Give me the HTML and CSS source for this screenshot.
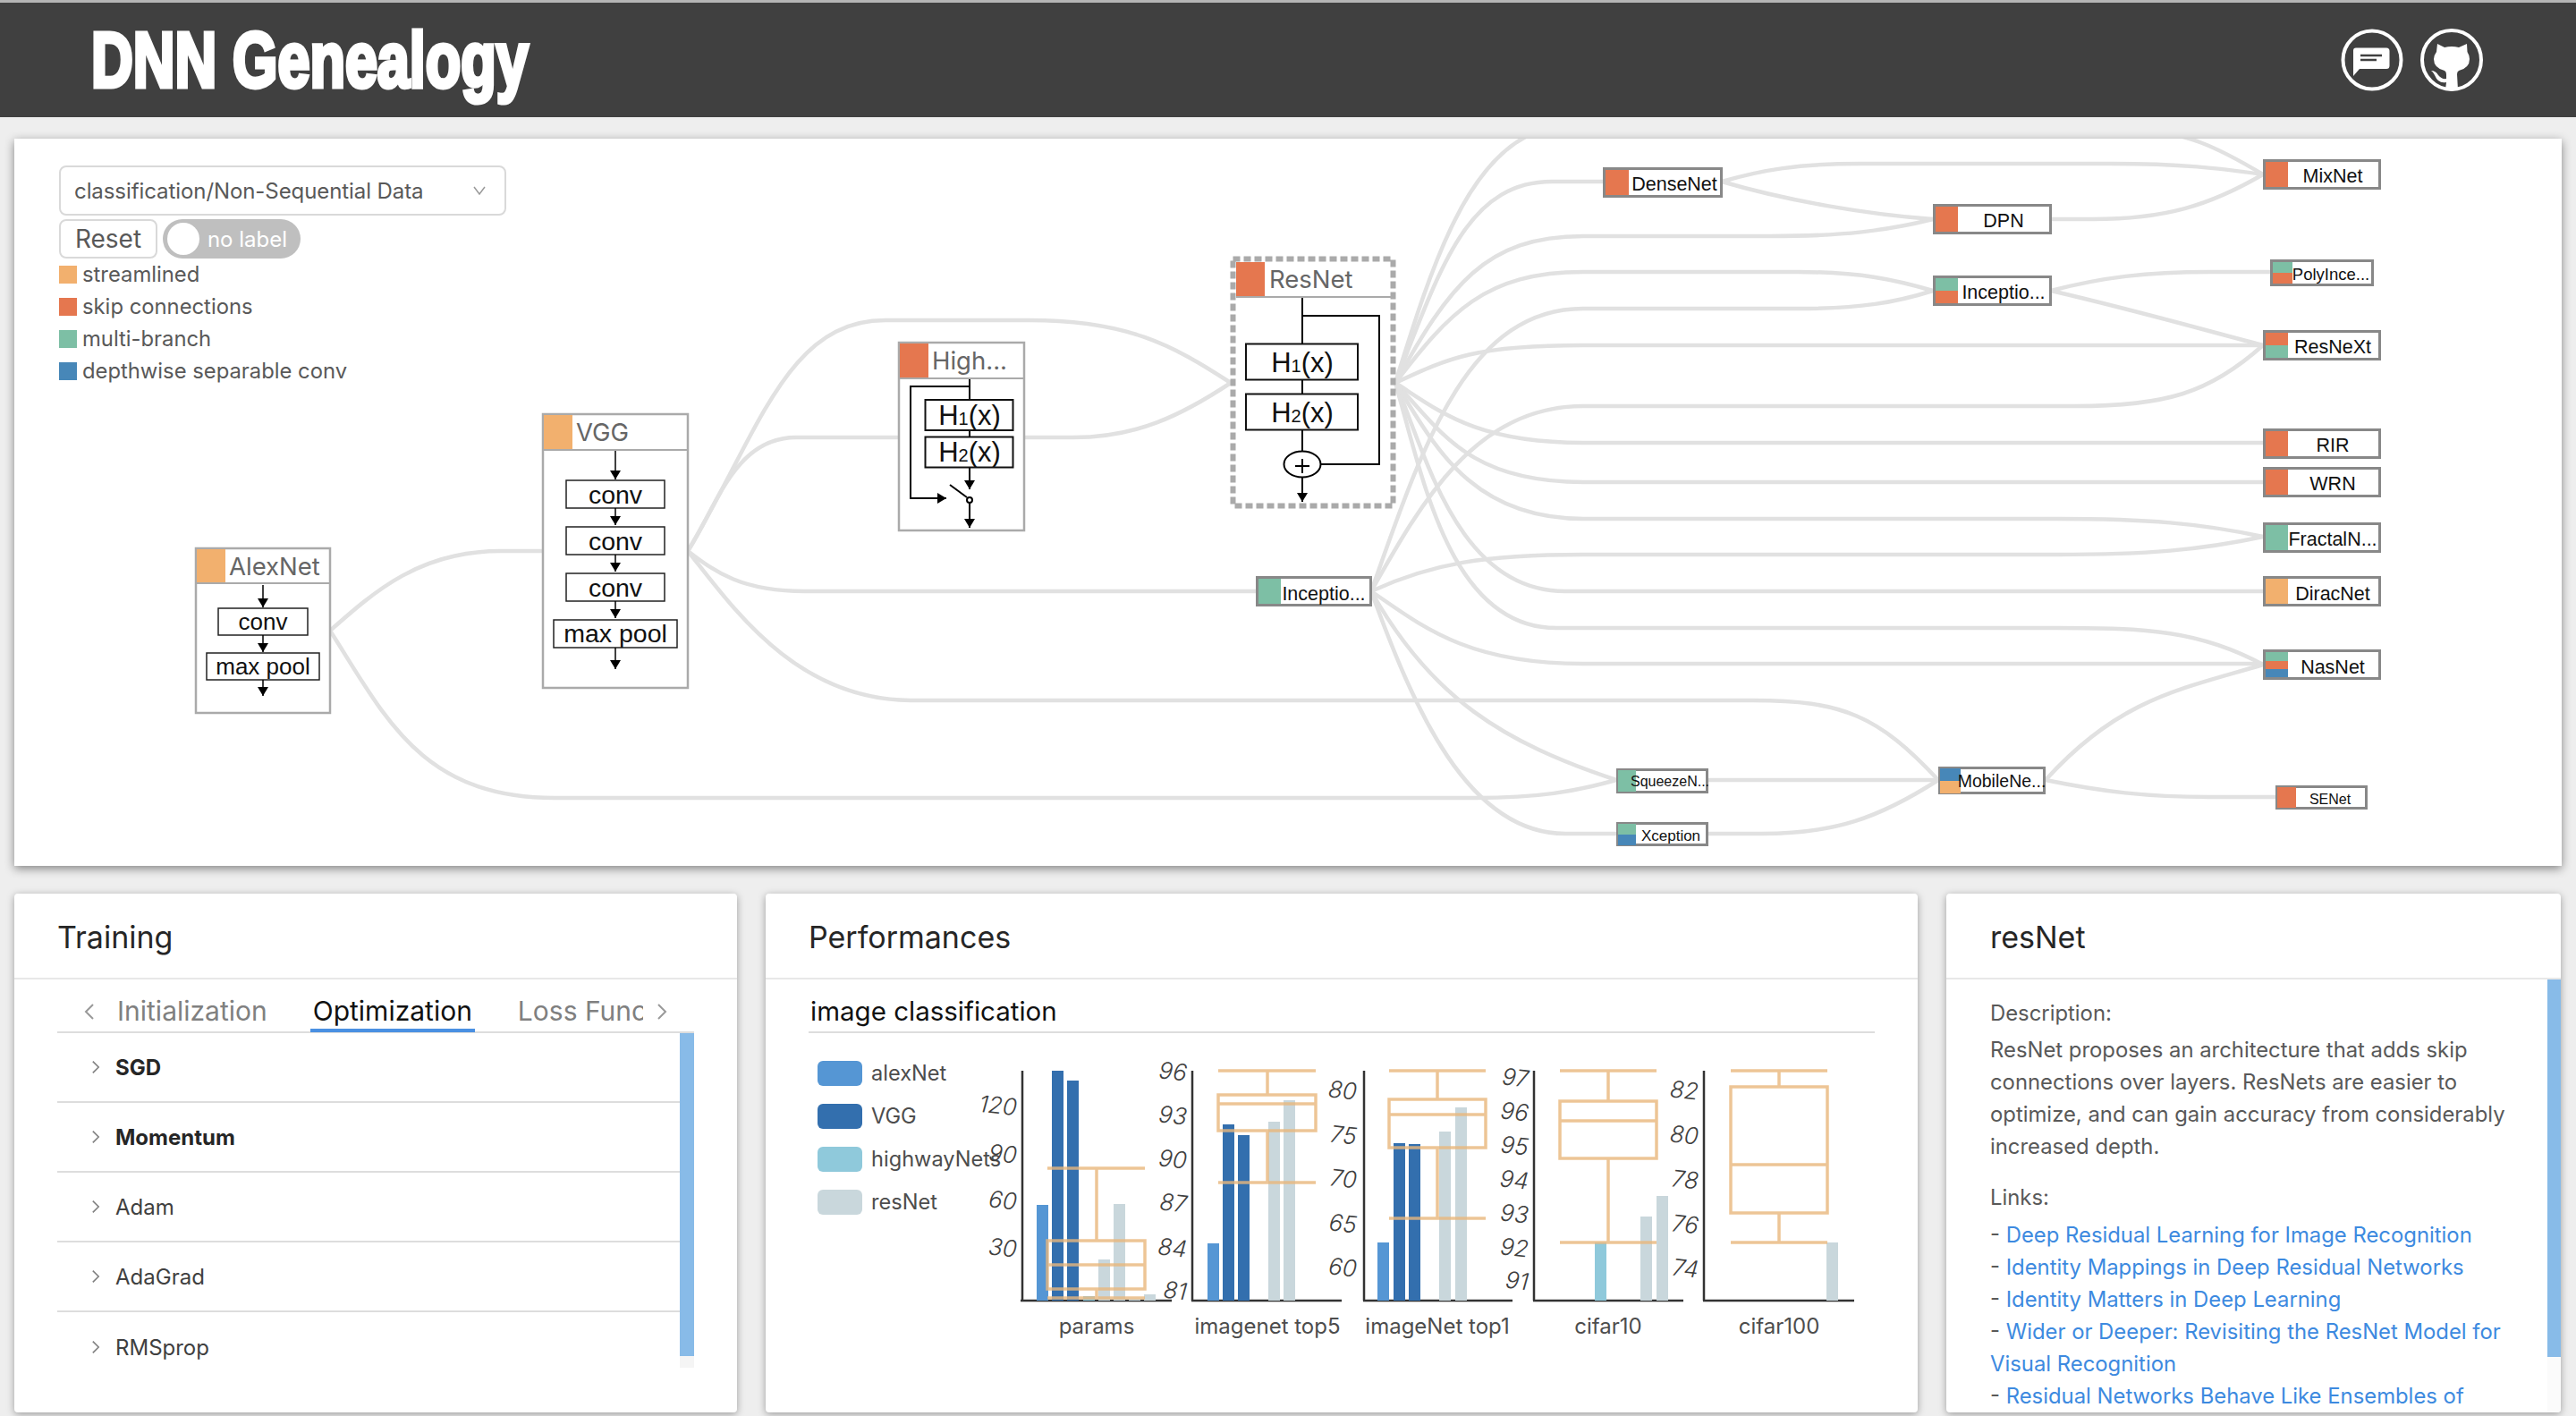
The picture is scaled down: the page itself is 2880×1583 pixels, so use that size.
FILE: index.html
```html
<!DOCTYPE html>
<html lang="en">
<head>
  <meta charset="UTF-8" />
  <title>DNN Genealogy</title>
  <link rel="stylesheet" href="styles.css">
</head>
<body>
<header class="topbar">
  <h1 class="brand">DNN Genealogy</h1>
  <div class="topbar-icons">
    <svg class="round-icon" viewBox="0 0 70 70">
      <circle class="ring" cx="35" cy="35" r="32.5" />
      <path class="solid" d="M17 21.5H51a3.5 3.5 0 0 1 3.500 3.500V41.500a3.500 3.500 0 0 1-3.500 3.500H21L14 53V24.500a3 3 0 0 1 3-3z" />
      <path class="gap-line" d="M22 30H46M22 35H40" />
    </svg>
    <svg class="round-icon" viewBox="0 0 70 70">
      <circle class="ring" cx="35" cy="35" r="33" />
      <path class="solid" d="M19 17L27 21Q35 19 43 21L52 17L52.500 26Q55 30 55 34Q55 44 43 47Q41 48 41 51L42 68.500Q35 70 28 68.500L29 60Q20 62 16 52Q14 48 12 47Q17 47 20 52Q24 57 29 56L29 51Q29 48 27 47Q15 44 15 34Q15 30 18 26Z" />
    </svg>
  </div>
</header>

<main class="page">
  <section class="graph-card">
    <div class="controls">
      <div class="select-box">
        <span>classification/Non-Sequential Data</span>
        <svg class="select-arrow" viewBox="0 0 14 10"><path d="M1 1L7 9L13 1" /></svg>
      </div>
      <div class="control-row">
        <button class="reset-btn" type="button">Reset</button>
        <div class="toggle"><span class="toggle-knob"></span><span>no label</span></div>
      </div>
      <ul class="arch-legend">
        <li><i class="dot orange"></i>streamlined</li>
        <li><i class="dot red"></i>skip connections</li>
        <li><i class="dot green"></i>multi-branch</li>
        <li><i class="dot blue"></i>depthwise separable conv</li>
      </ul>
    </div>

    <!-- viewBox uses page coordinates -->
    <svg class="graph" viewBox="16 155 2848 813">
      <defs>
        <marker id="arrow" viewBox="0 0 10 20" refX="10" refY="10" markerWidth="10" markerHeight="20" markerUnits="userSpaceOnUse" orient="auto-start-reverse">
          <path d="M0 4L10 10L0 16Z" />
        </marker>
      </defs>

      <g class="edges">
        <path d="M1560 428C1600 300 1640 170 1725 145L2380 145C2440 145 2480 165 2530 195" />
        <path d="M1560 428C1610 300 1640 203 1735 203L1792 203" />
        <path d="M1560 428C1620 320 1660 264 1770 264L1980 264C2060 264 2110 258 2161 245" />
        <path d="M1560 428C1620 350 1660 304 1770 304L2010 304C2080 304 2120 313 2161 325" />
        <path d="M1560 428C1620 400 1650 386 1770 386L2530 386" />
        <path d="M1560 428C1610 460 1650 495 1770 495L2530 495" />
        <path d="M1560 428C1610 480 1640 539 1770 539L2530 539" />
        <path d="M1560 428C1600 490 1640 580 1770 580L2300 580C2400 580 2460 585 2530 600" />
        <path d="M1560 428C1595 510 1630 661 1750 661L2530 661" />
        <path d="M1560 428C1590 530 1620 702 1740 702L2300 702C2400 702 2460 705 2530 743" />
        <path d="M1533 661C1590 500 1640 345 1770 345L2010 345C2080 345 2120 338 2161 325" />
        <path d="M1533 661C1590 560 1650 454 1770 454L2320 454C2420 454 2470 440 2530 386" />
        <path d="M1533 661C1600 630 1660 620 1770 620L2300 620C2400 620 2460 615 2530 600" />
        <path d="M1533 661C1590 700 1640 742 1770 742L2530 742" />
        <path d="M1533 661C1600 780 1680 830 1807 872" />
        <path d="M1533 661C1580 790 1640 932 1750 932L1807 932" />
        <path d="M769 616C800 570 820 489 890 489L1004 489" />
        <path d="M769 616C850 480 880 358 990 358L1150 358C1260 358 1310 385 1376 428" />
        <path d="M1146 489L1200 489C1270 489 1320 465 1376 428" />
        <path d="M769 616C800 640 830 661 900 661L1404 661" />
        <path d="M769 616C820 680 890 783 1020 783L1960 783C2060 783 2100 800 2167 872" />
        <path d="M369 705C420 660 470 616 560 616L606 616" />
        <path d="M369 705C430 800 470 892 620 892L1650 892C1720 892 1760 885 1807 872" />
        <path d="M1925 203C1970 190 2010 183 2080 183L2360 183C2440 183 2480 188 2530 195" />
        <path d="M1925 203C2000 225 2090 240 2161 245" />
        <path d="M2293 245L2340 245C2420 245 2470 230 2530 195" />
        <path d="M2293 325C2350 310 2400 304 2470 304L2538 304" />
        <path d="M2293 325C2380 345 2450 365 2530 386" />
        <path d="M1909 872L2167 872" />
        <path d="M1909 932L1970 932C2050 932 2100 915 2167 872" />
        <path d="M2287 872C2370 780 2440 770 2530 743" />
        <path d="M2287 872C2350 885 2400 891 2470 891L2544 891" />
      </g>

      <!-- big nodes with block diagrams -->
      <g>
        <rect class="big-box" x="219" y="613" width="150" height="184" />
        <rect class="fill-orange" x="220" y="614" width="32" height="38" />
        <path class="big-rule" d="M220 652H368" />
        <text class="big-title" x="256" y="643">AlexNet</text>
        <path class="wire thin" marker-end="url(#arrow)" d="M294 654V679" />
        <rect class="block" x="244" y="680" width="100" height="30" />
        <text class="block-text size-26" x="294" y="704">conv</text>
        <path class="wire thin" marker-end="url(#arrow)" d="M294 710V729" />
        <rect class="block" x="231" y="730" width="126" height="30" />
        <text class="block-text size-26" x="294" y="754">max pool</text>
        <path class="wire thin" marker-end="url(#arrow)" d="M294 760V778" />
      </g>
      <g>
        <rect class="big-box" x="607" y="463" width="162" height="306" />
        <rect class="fill-orange" x="608" y="464" width="32" height="39" />
        <path class="big-rule" d="M608 503H768" />
        <text class="big-title" x="644" y="493">VGG</text>
        <path class="wire thin" marker-end="url(#arrow)" d="M688 504V536" />
        <rect class="block" x="633" y="537" width="110" height="31" />
        <text class="block-text size-28" x="688" y="563">conv</text>
        <path class="wire thin" marker-end="url(#arrow)" d="M688 568V587" />
        <rect class="block" x="633" y="589" width="110" height="31" />
        <text class="block-text size-28" x="688" y="615">conv</text>
        <path class="wire thin" marker-end="url(#arrow)" d="M688 620V639" />
        <rect class="block" x="633" y="641" width="110" height="31" />
        <text class="block-text size-28" x="688" y="667">conv</text>
        <path class="wire thin" marker-end="url(#arrow)" d="M688 672V691" />
        <rect class="block" x="619" y="693" width="138" height="31" />
        <text class="block-text size-28" x="688" y="718">max pool</text>
        <path class="wire thin" marker-end="url(#arrow)" d="M688 724V748" />
      </g>
      <g>
        <rect class="big-box" x="1005" y="383" width="140" height="210" />
        <rect class="fill-red" x="1006" y="384" width="32" height="39" />
        <path class="big-rule" d="M1006 423H1144" />
        <text class="big-title" x="1042" y="413">High...</text>
        <path class="wire" d="M1084 424V447M1084 481V488M1084 432H1018V557H1050" />
        <path class="wire" marker-end="url(#arrow)" d="M1048 557H1058" />
        <rect class="block thick" x="1034.500" y="447" width="98" height="34" />
        <text class="block-text size-30" x="1084" y="475">H<tspan class="sub">1</tspan>(x)</text>
        <rect class="block thick" x="1034.500" y="488.500" width="98" height="34" />
        <text class="block-text size-30" x="1084" y="516">H<tspan class="sub">2</tspan>(x)</text>
        <path class="wire" marker-end="url(#arrow)" d="M1084 523V547" />
        <path class="wire" d="M1062 542L1081 556" />
        <circle class="wire white" cx="1084" cy="559" r="3" />
        <path class="wire" marker-end="url(#arrow)" d="M1084 562V590" />
      </g>
      <g>
        <rect class="focus-box" x="1378.500" y="289.500" width="179" height="276" />
        <rect class="fill-red" x="1382" y="293" width="32" height="38" />
        <path class="big-rule" d="M1382 332H1555" />
        <text class="big-title" x="1419" y="322">ResNet</text>
        <path class="wire" d="M1456 333V384M1456 425V440M1456 481V504M1456 353H1542V519H1476" />
        <rect class="block thick" x="1393" y="384.500" width="125" height="40" />
        <text class="block-text size-30" x="1456" y="416">H<tspan class="sub">1</tspan>(x)</text>
        <rect class="block thick" x="1393" y="440.500" width="125" height="40" />
        <text class="block-text size-30" x="1456" y="472">H<tspan class="sub">2</tspan>(x)</text>
        <ellipse class="wire white" cx="1456" cy="519" rx="20.500" ry="14.500" />
        <path class="wire" d="M1448 521H1464M1456 513V529" />
        <path class="wire" marker-end="url(#arrow)" d="M1456 534V561" />
      </g>

      <!-- compact nodes -->
      <g>
        <rect class="small-box" x="1793.500" y="188.500" width="131" height="31" />
        <rect class="fill-red" x="1795" y="190" width="26" height="28" />
        <text class="small-text size-22" x="1872" y="213">DenseNet</text>
      </g>
      <g>
        <rect class="small-box" x="2162.500" y="229.500" width="130" height="31" />
        <rect class="fill-red" x="2164" y="231" width="25" height="28" />
        <text class="small-text size-22" x="2240" y="254">DPN</text>
      </g>
      <g>
        <rect class="small-box" x="2531.500" y="179.500" width="129" height="31" />
        <rect class="fill-red" x="2533" y="181" width="25" height="28" />
        <text class="small-text size-22" x="2608" y="204">MixNet</text>
      </g>
      <g>
        <rect class="small-box" x="2162.500" y="309.500" width="130" height="31" />
        <rect class="fill-green" x="2164" y="311" width="25" height="14" />
        <rect class="fill-red" x="2164" y="325" width="25" height="14" />
        <text class="small-text size-22" x="2240" y="334">Inceptio...</text>
      </g>
      <g>
        <rect class="small-box" x="2539.500" y="291.500" width="113" height="27" />
        <rect class="fill-green" x="2541" y="293" width="22" height="12" />
        <rect class="fill-red" x="2541" y="305" width="22" height="12" />
        <text class="small-text size-18" x="2606" y="313">PolyInce...</text>
      </g>
      <g>
        <rect class="small-box" x="2531.500" y="370.500" width="129" height="31" />
        <rect class="fill-red" x="2533" y="372" width="25" height="14" />
        <rect class="fill-green" x="2533" y="386" width="25" height="14" />
        <text class="small-text size-22" x="2608" y="395">ResNeXt</text>
      </g>
      <g>
        <rect class="small-box" x="2531.500" y="480.500" width="129" height="31" />
        <rect class="fill-red" x="2533" y="482" width="25" height="28" />
        <text class="small-text size-22" x="2608" y="505">RIR</text>
      </g>
      <g>
        <rect class="small-box" x="2531.500" y="523.500" width="129" height="31" />
        <rect class="fill-red" x="2533" y="525" width="25" height="28" />
        <text class="small-text size-22" x="2608" y="548">WRN</text>
      </g>
      <g>
        <rect class="small-box" x="2531.500" y="585.500" width="129" height="31" />
        <rect class="fill-green" x="2533" y="587" width="25" height="28" />
        <text class="small-text size-22" x="2608" y="610">FractalN...</text>
      </g>
      <g>
        <rect class="small-box" x="2531.500" y="645.500" width="129" height="31" />
        <rect class="fill-orange" x="2533" y="647" width="25" height="28" />
        <text class="small-text size-22" x="2608" y="671">DiracNet</text>
      </g>
      <g>
        <rect class="small-box" x="2531.500" y="727.500" width="129" height="31" />
        <rect class="fill-green" x="2533" y="729" width="25" height="10" />
        <rect class="fill-red" x="2533" y="739" width="25" height="9" />
        <rect class="fill-blue" x="2533" y="748" width="25" height="9" />
        <text class="small-text size-22" x="2608" y="753">NasNet</text>
      </g>
      <g>
        <rect class="small-box" x="1405.500" y="645.500" width="127" height="31" />
        <rect class="fill-green" x="1407" y="647" width="25" height="28" />
        <text class="small-text size-22" x="1480" y="671">Inceptio...</text>
      </g>
      <g>
        <rect class="small-box" x="1808.500" y="860.500" width="100" height="25" />
        <rect class="fill-green" x="1809" y="861" width="20" height="24" />
        <text class="small-text size-16" x="1867" y="879">SqueezeN...</text>
      </g>
      <g>
        <rect class="small-box" x="1808.500" y="920.500" width="100" height="24" />
        <rect class="fill-green" x="1809" y="921" width="20" height="12" />
        <rect class="fill-blue" x="1809" y="933" width="20" height="12" />
        <text class="small-text size-17" x="1868" y="940">Xception</text>
      </g>
      <g>
        <rect class="small-box" x="2168.500" y="858.500" width="117" height="28" />
        <rect class="fill-blue" x="2169" y="859" width="23" height="14" />
        <rect class="fill-orange" x="2169" y="873" width="23" height="14" />
        <text class="small-text size-20" x="2238" y="880">MobileNe...</text>
      </g>
      <g>
        <rect class="small-box" x="2545.500" y="879.500" width="100" height="24" />
        <rect class="fill-red" x="2546" y="880" width="21" height="23" />
        <text class="small-text size-16" x="2605" y="899">SENet</text>
      </g>
    </svg>
  </section>

  <div class="panels">
    <section class="panel panel-training">
      <h2 class="panel-title">Training</h2>
      <div class="panel-body training-body">
        <div class="tabs">
          <svg class="tab-arrow" viewBox="0 0 12 20"><path d="M10 2L2 10L10 18" /></svg>
          <div class="tab-list">
            <span class="tab">Initialization</span>
            <span class="tab tab-active">Optimization</span>
            <span class="tab">Loss Function</span>
          </div>
          <svg class="tab-arrow" viewBox="0 0 12 20"><path d="M2 2L10 10L2 18" /></svg>
        </div>
        <div class="list-wrap">
          <ul class="method-list">
            <li class="method method-bold"><svg class="chevron" viewBox="0 0 12 20"><path d="M2 2L10 10L2 18" /></svg>SGD</li>
            <li class="method method-bold"><svg class="chevron" viewBox="0 0 12 20"><path d="M2 2L10 10L2 18" /></svg>Momentum</li>
            <li class="method"><svg class="chevron" viewBox="0 0 12 20"><path d="M2 2L10 10L2 18" /></svg>Adam</li>
            <li class="method"><svg class="chevron" viewBox="0 0 12 20"><path d="M2 2L10 10L2 18" /></svg>AdaGrad</li>
            <li class="method"><svg class="chevron" viewBox="0 0 12 20"><path d="M2 2L10 10L2 18" /></svg>RMSprop</li>
          </ul>
          <div class="scroll-track list-track"><div class="scroll-thumb list-thumb"></div></div>
        </div>
      </div>
    </section>

    <section class="panel panel-perf">
      <h2 class="panel-title">Performances</h2>
      <div class="panel-body perf-body">
        <h3 class="perf-heading">image classification</h3>
        <div class="perf-row">
          <ul class="perf-legend">
            <li><i class="perf-key key-alex"></i>alexNet</li>
            <li><i class="perf-key key-vgg"></i>VGG</li>
            <li><i class="perf-key key-highway"></i>highwayNets</li>
            <li><i class="perf-key key-res"></i>resNet</li>
          </ul>
          <!-- viewBox uses page coordinates -->
          <svg class="charts" viewBox="1100 1170 990 340">
            <g class="axes">
              <path d="M1143 1197V1454M1141 1454H1310" />
              <path d="M1333 1197V1454M1332 1454H1500" />
              <path d="M1525 1197V1454M1524 1454H1691" />
              <path d="M1715 1197V1454M1714 1454H1882" />
              <path d="M1905 1197V1454M1904 1454H2073" />
            </g>

            <rect class="bar key-alex" x="1159" y="1347" width="13" height="107" />
            <rect class="bar key-vgg" x="1176" y="1197" width="13" height="257" />
            <rect class="bar key-vgg" x="1193" y="1208" width="13" height="246" />
            <rect class="bar key-highway" x="1211" y="1449" width="13" height="5" />
            <rect class="bar key-res" x="1228" y="1408" width="13" height="46" />
            <rect class="bar key-res" x="1245" y="1346" width="13" height="108" />
            <rect class="bar key-res" x="1262" y="1452" width="13" height="2" />
            <rect class="bar key-res" x="1279" y="1447" width="13" height="7" />

            <rect class="bar key-alex" x="1350" y="1390" width="13" height="64" />
            <rect class="bar key-vgg" x="1367" y="1257" width="13" height="197" />
            <rect class="bar key-vgg" x="1384" y="1269" width="13" height="185" />
            <rect class="bar key-res" x="1418" y="1254" width="13" height="200" />
            <rect class="bar key-res" x="1435" y="1230" width="13" height="224" />

            <rect class="bar key-alex" x="1540" y="1389" width="13" height="65" />
            <rect class="bar key-vgg" x="1558" y="1278" width="13" height="176" />
            <rect class="bar key-vgg" x="1575" y="1279" width="13" height="175" />
            <rect class="bar key-res" x="1609" y="1265" width="13" height="189" />
            <rect class="bar key-res" x="1627" y="1238" width="13" height="216" />

            <rect class="bar key-highway" x="1783" y="1389" width="13" height="65" />
            <rect class="bar key-res" x="1834" y="1360" width="13" height="94" />
            <rect class="bar key-res" x="1852" y="1337" width="13" height="117" />

            <rect class="bar key-res" x="2042" y="1389" width="13" height="65" />

            <g class="box-plot">
              <path d="M1171 1306H1280M1226 1306V1387M1171 1387H1280V1441H1171ZM1171 1414H1280M1226 1441V1451M1171 1451H1280" />
              <path d="M1362 1197H1471M1417 1197V1224M1362 1224H1471V1264H1362ZM1362 1234H1471M1417 1264V1322M1362 1322H1471" />
              <path d="M1553 1197H1661M1607 1197V1229M1553 1229H1661V1283H1553ZM1553 1246H1661M1607 1283V1362M1553 1362H1661" />
              <path d="M1744 1197H1852M1798 1197V1231M1744 1231H1852V1295H1744ZM1744 1253H1852M1798 1295V1389M1744 1389H1852" />
              <path d="M1935 1197H2043M1989 1197V1215M1935 1215H2043V1356H1935ZM1935 1302H2043M1989 1356V1389M1935 1389H2043" />
            </g>

            <g class="tick">
              <text x="1137" y="1245">120</text>
              <text x="1137" y="1299">90</text>
              <text x="1137" y="1351">60</text>
              <text x="1137" y="1404">30</text>
              <text x="1327" y="1207">96</text>
              <text x="1327" y="1256">93</text>
              <text x="1327" y="1305">90</text>
              <text x="1327" y="1354">87</text>
              <text x="1327" y="1404">84</text>
              <text x="1327" y="1452">81</text>
              <text x="1517" y="1228">80</text>
              <text x="1517" y="1278">75</text>
              <text x="1517" y="1327">70</text>
              <text x="1517" y="1377">65</text>
              <text x="1517" y="1426">60</text>
              <text x="1709" y="1214">97</text>
              <text x="1709" y="1252">96</text>
              <text x="1709" y="1290">95</text>
              <text x="1709" y="1328">94</text>
              <text x="1709" y="1366">93</text>
              <text x="1709" y="1404">92</text>
              <text x="1709" y="1441">91</text>
              <text x="1899" y="1228">82</text>
              <text x="1899" y="1278">80</text>
              <text x="1899" y="1328">78</text>
              <text x="1899" y="1378">76</text>
              <text x="1899" y="1427">74</text>
            </g>

            <g class="chart-name">
              <text x="1226" y="1491">params</text>
              <text x="1417" y="1491">imagenet top5</text>
              <text x="1607" y="1491">imageNet top1</text>
              <text x="1798" y="1491">cifar10</text>
              <text x="1989" y="1491">cifar100</text>
            </g>
          </svg>
        </div>
      </div>
    </section>

    <section class="panel panel-info">
      <h2 class="panel-title">resNet</h2>
      <div class="info-body">
        <div class="info-text">
          <p class="info-label">Description:</p>
          <p class="info-para">ResNet proposes an architecture that adds skip connections over layers. ResNets are easier to optimize, and can gain accuracy from considerably increased depth.</p>
          <p class="info-label links-label">Links:</p>
          <p class="info-para">- <a href="#">Deep Residual Learning for Image Recognition</a></p>
          <p class="info-para">- <a href="#">Identity Mappings in Deep Residual Networks</a></p>
          <p class="info-para">- <a href="#">Identity Matters in Deep Learning</a></p>
          <p class="info-para">- <a href="#">Wider or Deeper: Revisiting the ResNet Model for Visual Recognition</a></p>
          <p class="info-para">- <a href="#">Residual Networks Behave Like Ensembles of Relatively Shallow Networks</a></p>
        </div>
        <div class="scroll-track info-track"><div class="scroll-thumb info-thumb"></div></div>
      </div>
    </section>
  </div>
</main>
</body>
</html>
```

FILE: styles.css
```css
html,
body {
  margin: 0;
  padding: 0;
  height: 1583px;
  overflow: hidden;
}

body {
  font-family: Inter, "Noto Sans", sans-serif;
  background-color: #eeeeee;
  color: #595959;
}

ul {
  list-style: none;
  margin: 0;
  padding: 0;
}

.topbar {
  height: 128px;
  border-top: 3px solid #b5b5b5;
  background-color: #404040;
  display: flex;
  align-items: center;
  justify-content: space-between;
  padding: 0 104px 0 102px;
}

.brand {
  margin: 0;
  font-family: "Liberation Sans", sans-serif;
  font-size: 88px;
  font-weight: bold;
  color: #fff;
  white-space: nowrap;
  -webkit-text-stroke: 5px #fff;
  transform: scaleX(0.735);
  transform-origin: left center;
}

.topbar-icons {
  display: flex;
  gap: 19px;
}

.round-icon {
  width: 70px;
  height: 70px;
  display: block;
}

.ring {
  fill: none;
  stroke: #fff;
  stroke-width: 4;
}

.solid {
  fill: #fff;
}

.gap-line {
  stroke: #404040;
  stroke-width: 2.500;
  fill: none;
}

.page {
  padding: 24px 16px 0;
}

.graph-card {
  position: relative;
  height: 813px;
  background-color: #fff;
  box-shadow: 0 3px 10px rgba(0, 0, 0, 0.45);
  overflow: hidden;
}

.graph {
  display: block;
  width: 2848px;
  height: 813px;
}

/* sits over the graph, top left */
.controls {
  position: absolute;
  left: 50px;
  top: 30px;
  width: 500px;
  font-size: 24px;
}

.select-box {
  height: 52px;
  border: 2px solid #d9d9d9;
  border-radius: 8px;
  display: flex;
  align-items: center;
  justify-content: space-between;
  padding: 0 14px 0 15px;
  letter-spacing: -0.08px;
}

.select-arrow {
  width: 14px;
  height: 10px;
  fill: none;
  stroke: #999;
  stroke-width: 1.500;
  margin-right: 7px;
}

.control-row {
  display: flex;
  gap: 6px;
  margin-top: 4px;
}

.reset-btn {
  width: 110px;
  height: 44px;
  padding: 0;
  background: #fff;
  border: 2px solid #d9d9d9;
  border-radius: 8px;
  font-family: inherit;
  font-size: 28px;
  color: #595959;
}

.toggle {
  width: 154px;
  height: 44px;
  box-sizing: border-box;
  padding: 0 15px 0 5px;
  border-radius: 22px;
  background-color: #bfbfbf;
  color: #fff;
  display: flex;
  align-items: center;
  justify-content: space-between;
}

.toggle-knob {
  width: 36px;
  height: 36px;
  border-radius: 50%;
  background-color: #fff;
}

.arch-legend {
  margin-top: 8px;
  font-size: 23.800px;
}

.arch-legend li {
  height: 36px;
  display: flex;
  align-items: flex-start;
  line-height: 20px;
  gap: 6px;
  white-space: nowrap;
}

.dot {
  width: 20px;
  height: 20px;
}

.orange { background-color: #f2b06e; }
.red { background-color: #e5774f; }
.green { background-color: #7dbfa5; }
.blue { background-color: #4787b8; }

.fill-orange { fill: #f2b06e; }
.fill-red { fill: #e5774f; }
.fill-green { fill: #7dbfa5; }
.fill-blue { fill: #4787b8; }

.edges path {
  fill: none;
  stroke: #e1e1e1;
  stroke-width: 4.500;
}

.big-box {
  fill: #fff;
  stroke: #aaaaaa;
  stroke-width: 2.500;
}

.focus-box {
  fill: #fff;
  stroke: #aaaaaa;
  stroke-width: 6;
  stroke-dasharray: 8 4;
}

.big-rule {
  stroke: #aaaaaa;
  stroke-width: 2;
}

.big-title {
  font-size: 27.500px;
  fill: #666666;
}

.small-box {
  fill: #fff;
  stroke: #888888;
  stroke-width: 3;
}

.small-text,
.block-text {
  font-family: "Liberation Sans", sans-serif;
  fill: #111;
  text-anchor: middle;
}

.size-16 { font-size: 16px; }
.size-17 { font-size: 17px; }
.size-18 { font-size: 18.500px; }
.size-20 { font-size: 19.500px; }
.size-22 { font-size: 21.500px; }
.size-26 { font-size: 26px; }
.size-28 { font-size: 28.500px; }
.size-30 { font-size: 31px; }

.sub {
  font-size: 20px;
}

.block {
  fill: #fff;
  stroke: #222;
  stroke-width: 1.500;
}

.block.thick {
  stroke: #111;
  stroke-width: 2;
}

.wire {
  fill: none;
  stroke: #000;
  stroke-width: 2;
}

.wire.thin {
  stroke-width: 1.500;
}

.wire.white {
  fill: #fff;
}

.panels {
  display: flex;
  gap: 32px;
  margin-top: 31px;
}

.panel {
  height: 580px;
  background-color: #fff;
  border-radius: 4px;
  box-shadow: 0 2px 8px rgba(0, 0, 0, 0.35);
  overflow: hidden;
  box-sizing: border-box;
}

.panel-training { width: 808px; }
.panel-perf { width: 1288px; }
.panel-info { width: 687px; }

.panel-title {
  box-sizing: border-box;
  height: 96px;
  margin: 0;
  padding: 0 48px;
  border-bottom: 2px solid #e8e8e8;
  font-size: 34px;
  font-weight: 400;
  line-height: 97px;
  color: #262626;
}

.panel-info .panel-title {
  padding-left: 49px;
}

.panel-body {
  padding: 0 48px;
}

.tabs {
  height: 58px;
  border-bottom: 2px solid #dddddd;
  display: flex;
  align-items: center;
  padding: 0 30px;
  box-sizing: content-box;
}

.tab-arrow {
  flex: none;
  width: 12px;
  height: 20px;
  margin-top: 14px;
  fill: none;
  stroke: #999;
  stroke-width: 2;
}

.tab-list {
  flex: 1;
  height: 60px;
  overflow: hidden;
  display: flex;
  gap: 45px;
  padding-left: 22px;
  margin-right: 15px;
  white-space: nowrap;
}

.tab {
  height: 56px;
  line-height: 73px;
  padding: 0 3px;
  font-size: 30px;
  color: #808080;
}

.tab-active {
  color: #111;
  border-bottom: 4px solid #4a90e2;
}

.list-wrap {
  display: flex;
  align-items: flex-start;
}

.method-list {
  flex: 1;
}

.method {
  box-sizing: border-box;
  height: 78px;
  border-bottom: 2px solid #dddddd;
  display: flex;
  align-items: center;
  font-size: 24px;
  color: #404040;
}

.method:last-child {
  border-bottom: none;
}

.method-bold {
  font-weight: 700;
  color: #262626;
}

.chevron {
  width: 10px;
  height: 16px;
  margin: 0 17px 0 38px;
  fill: none;
  stroke: #808080;
  stroke-width: 2;
}

.scroll-track {
  flex: none;
  background-color: #f5f5f5;
}

.scroll-thumb {
  background-color: #88bbe8;
}

.list-track {
  width: 16px;
  height: 374px;
}

.list-thumb {
  height: 361px;
}

.perf-heading {
  box-sizing: border-box;
  height: 60px;
  margin: 0;
  padding-left: 2px;
  border-bottom: 2px solid #dddddd;
  font-size: 29.500px;
  font-weight: 400;
  line-height: 71px;
  color: #111;
}

.perf-row {
  display: flex;
  margin-top: 15px;
}

.perf-legend {
  width: 196px;
  flex: none;
  padding: 16px 0 0 10px;
  box-sizing: border-box;
  font-size: 23.600px;
  white-space: nowrap;
  color: #4d4d4d;
}

.perf-legend li {
  height: 48px;
  display: flex;
  gap: 10px;
  line-height: 28px;
}

.perf-key {
  flex: none;
  width: 50px;
  height: 28px;
  border-radius: 6px;
}

i.key-alex { background-color: #5596d4; }
i.key-vgg { background-color: #336fae; }
i.key-highway { background-color: #8fc9db; }
i.key-res { background-color: #c9d7dc; }

.bar.key-alex { fill: #5596d4; }
.bar.key-vgg { fill: #336fae; }
.bar.key-highway { fill: #8fc9db; }
.bar.key-res { fill: #c9d7dc; }

.charts {
  flex: none;
  width: 990px;
  height: 340px;
  overflow: visible;
}

.axes path {
  fill: none;
  stroke: #333;
  stroke-width: 2.500;
}

.box-plot path {
  fill: none;
  stroke: #e8b67c;
  stroke-width: 3.500;
  opacity: 0.8;
}

.tick text {
  font-size: 26px;
  font-style: italic;
  font-weight: 300;
  fill: #404040;
  text-anchor: end;
  transform-box: fill-box;
  transform-origin: center;
  transform: rotate(6deg);
}

.chart-name text {
  font-size: 24px;
  fill: #4d4d4d;
  text-anchor: middle;
}

.info-body {
  display: flex;
  height: 486px;
}

.info-text {
  flex: 1;
  padding: 20px 28px 0 49px;
  font-size: 23.850px;
  line-height: 36px;
}

.info-para,
.info-label {
  margin: 0;
}

.info-label {
  margin-bottom: 5px;
}

.links-label {
  margin-top: 21px;
  margin-bottom: 6px;
}

.info-para a {
  color: #3d8ae0;
  text-decoration: none;
}

.info-track {
  width: 15px;
  height: 486px;
  background-color: #fbfbfb;
}

.info-thumb {
  height: 422px;
}
```
